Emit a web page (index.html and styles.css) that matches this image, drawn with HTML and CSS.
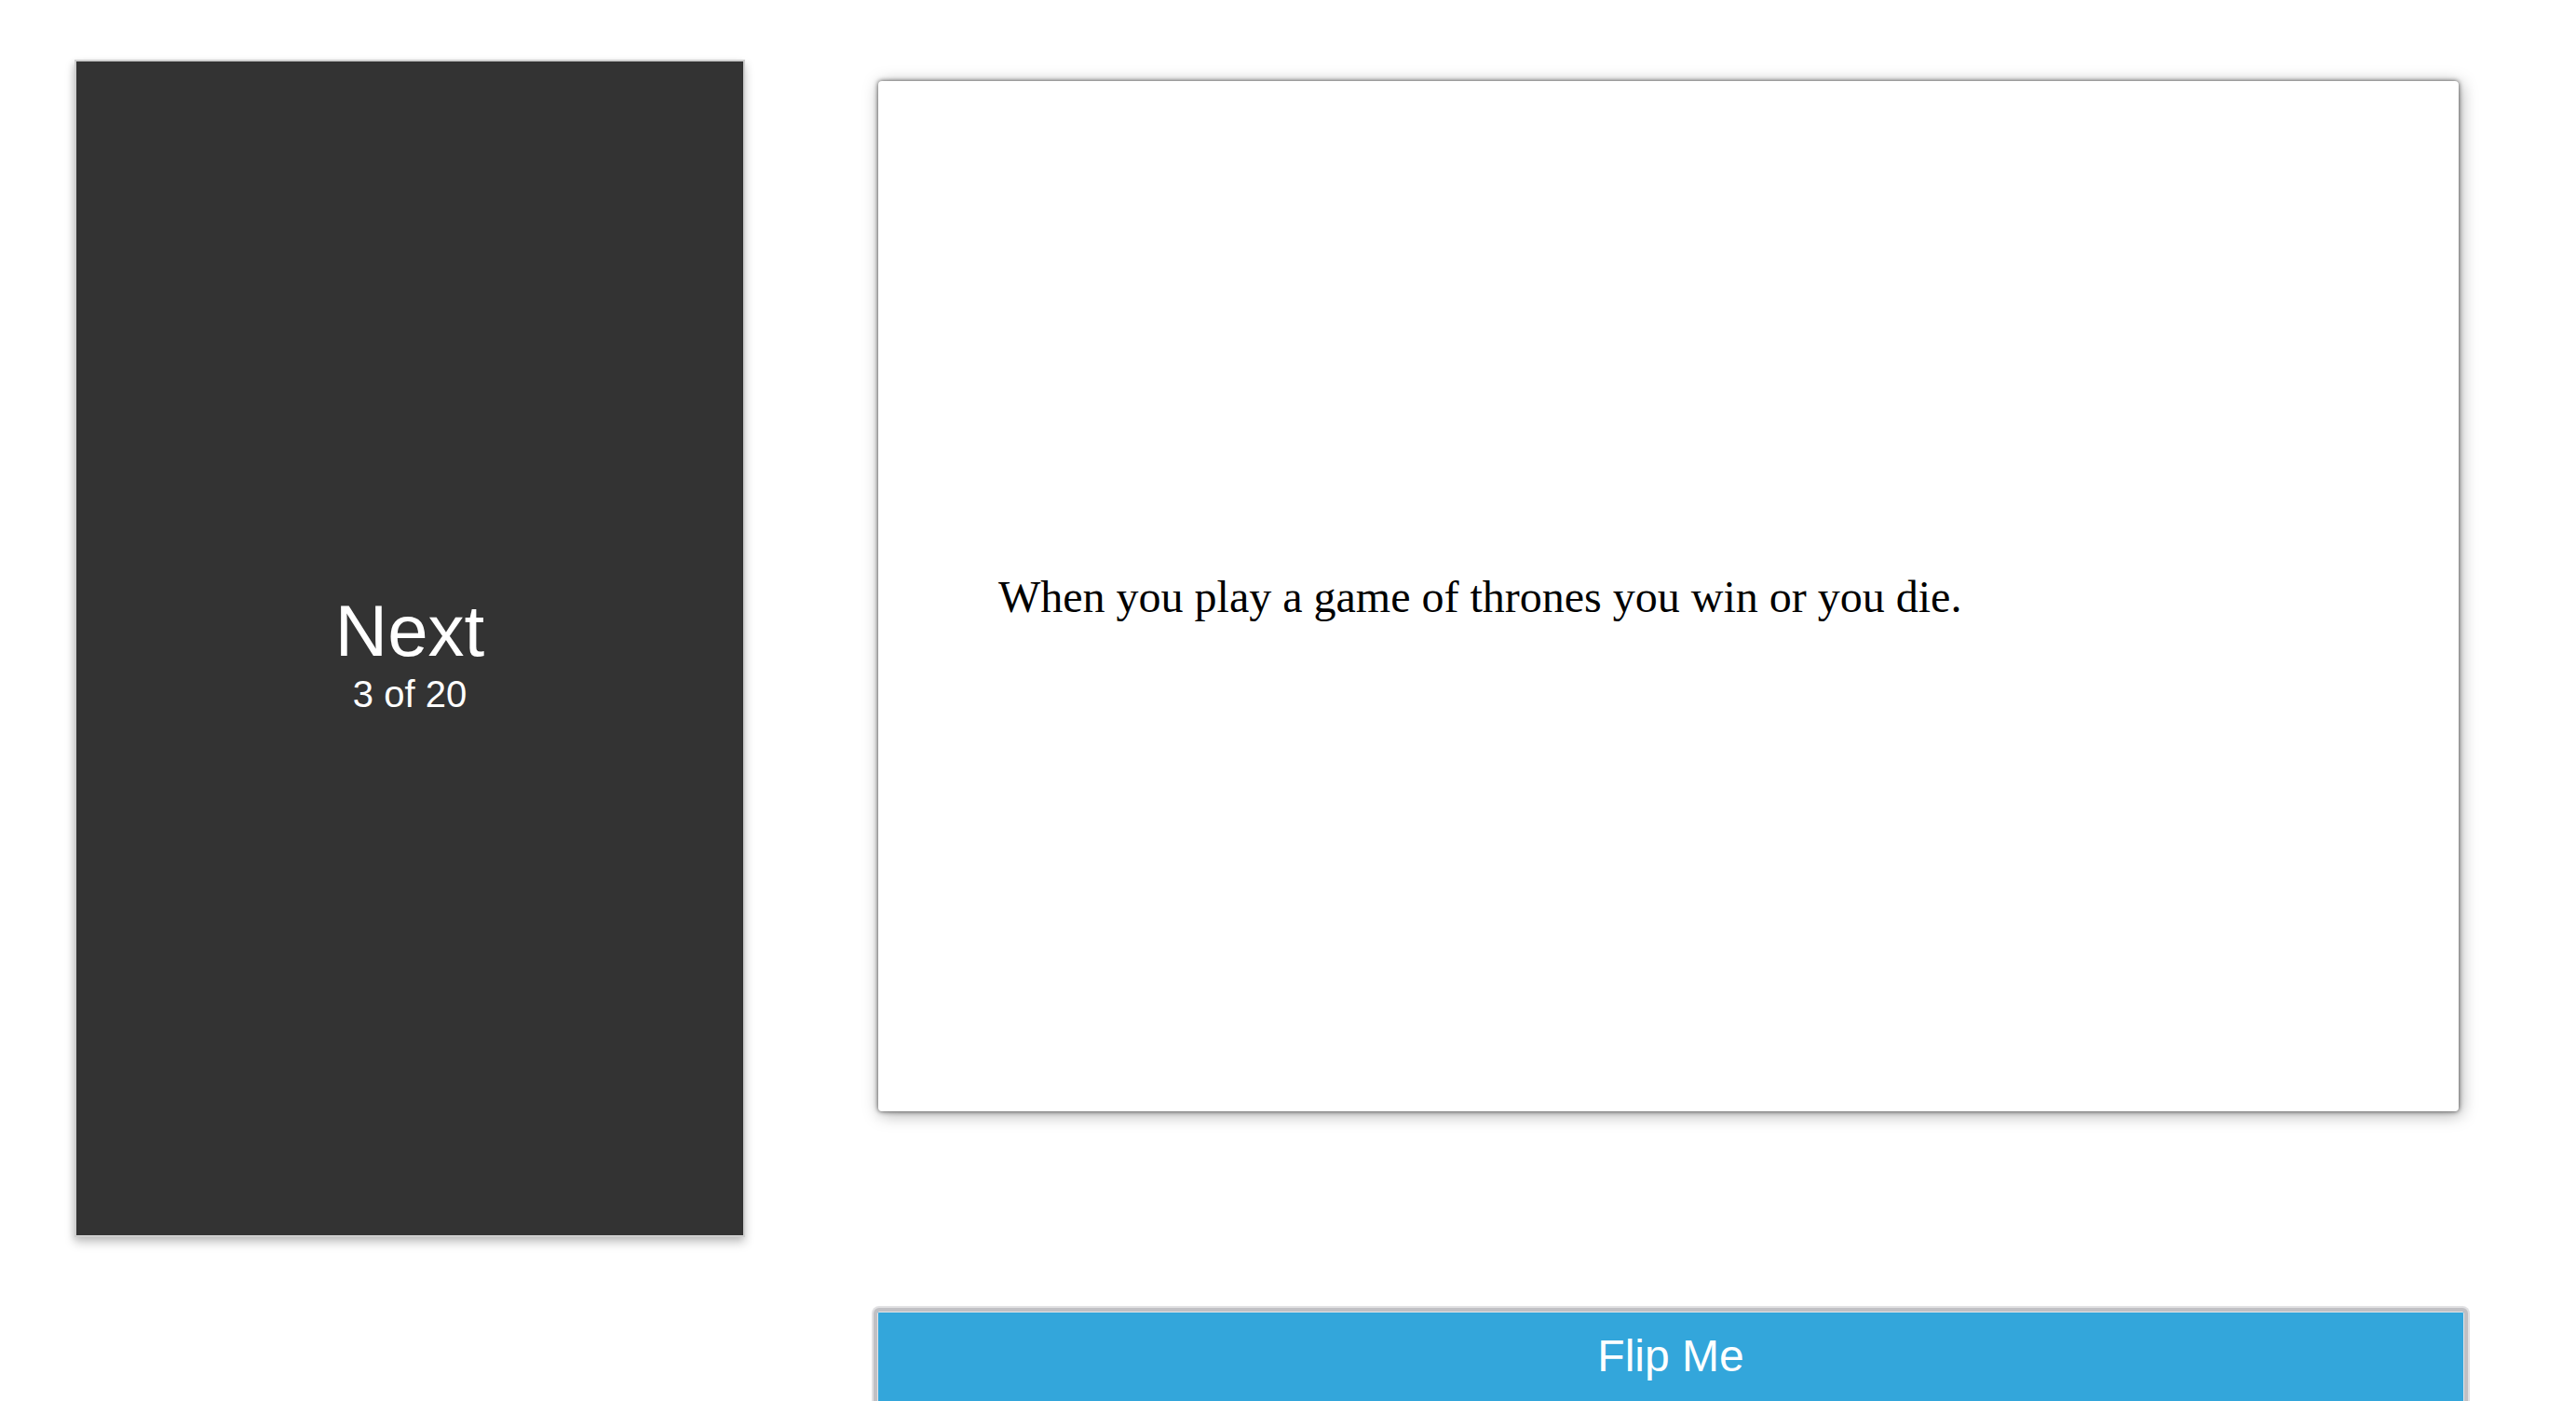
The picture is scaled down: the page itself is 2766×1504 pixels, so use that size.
FILE: index.html
```html
<!DOCTYPE html>
<html>
<head>
<meta charset="utf-8">
<link rel="stylesheet" href="styles.css">
</head>
<body>
<div class="page">
  <div class="deck">
    <div class="deck-title">Next</div>
    <div class="deck-count">3 of 20</div>
  </div>
  <div class="main">
    <div class="card">
      <p class="quote">When you play a game of thrones you win or you die.</p>
    </div>
    <button class="flip">Flip Me</button>
  </div>
</div>
</body>
</html>
```

FILE: styles.css
```css
html, body {
  margin: 0;
  padding: 0;
  background: #ffffff;
  overflow: hidden;
}
.page {
  display: flex;
  align-items: flex-start;
  padding: 64px 0 0 80px;
}
.deck {
  box-sizing: border-box;
  width: 720px;
  height: 1264px;
  background: #333333;
  border: 2px solid #cfcfcf;
  box-shadow: 0 6px 10px rgba(0, 0, 0, 0.22), -2px 2px 6px rgba(0, 0, 0, 0.08);
  display: flex;
  flex-direction: column;
  align-items: center;
  justify-content: center;
  padding-top: 10px;
  color: #ffffff;
  font-family: "Liberation Sans", Arial, sans-serif;
}
.deck-title {
  font-size: 78px;
  line-height: 78px;
}
.deck-count {
  font-size: 40px;
  line-height: 40px;
  margin-top: 9px;
}
.main {
  margin-left: 136px;
  width: 1716px;
  padding-top: 23px;
  display: flex;
  flex-direction: column;
}
.card {
  box-sizing: border-box;
  margin: 0 12px 0 7px;
  height: 1106px;
  background: #ffffff;
  border-radius: 4px;
  box-shadow: 0 0 5px rgba(0, 0, 0, 0.7), 2px 3px 18px rgba(0, 0, 0, 0.35);
  display: flex;
  align-items: center;
  padding-left: 129px;
}
.quote {
  margin: 0;
  font-family: "Liberation Serif", "Times New Roman", serif;
  font-size: 48px;
  color: #000000;
}
.flip {
  margin-top: 211px;
  margin-left: 2px;
  box-sizing: border-box;
  width: 1712px;
  background: #33a6db;
  border: 4px solid #c0c0c4;
  border-radius: 6px;
  box-shadow: 0 0 0 2px #e1e1e3, inset 0 0 0 1px #e4e4e6;
  color: #ffffff;
  font-family: "Liberation Sans", Arial, sans-serif;
  font-size: 48px;
  line-height: 55px;
  padding: 20px 0 60px 0;
  text-align: center;
  display: block;
}
```
